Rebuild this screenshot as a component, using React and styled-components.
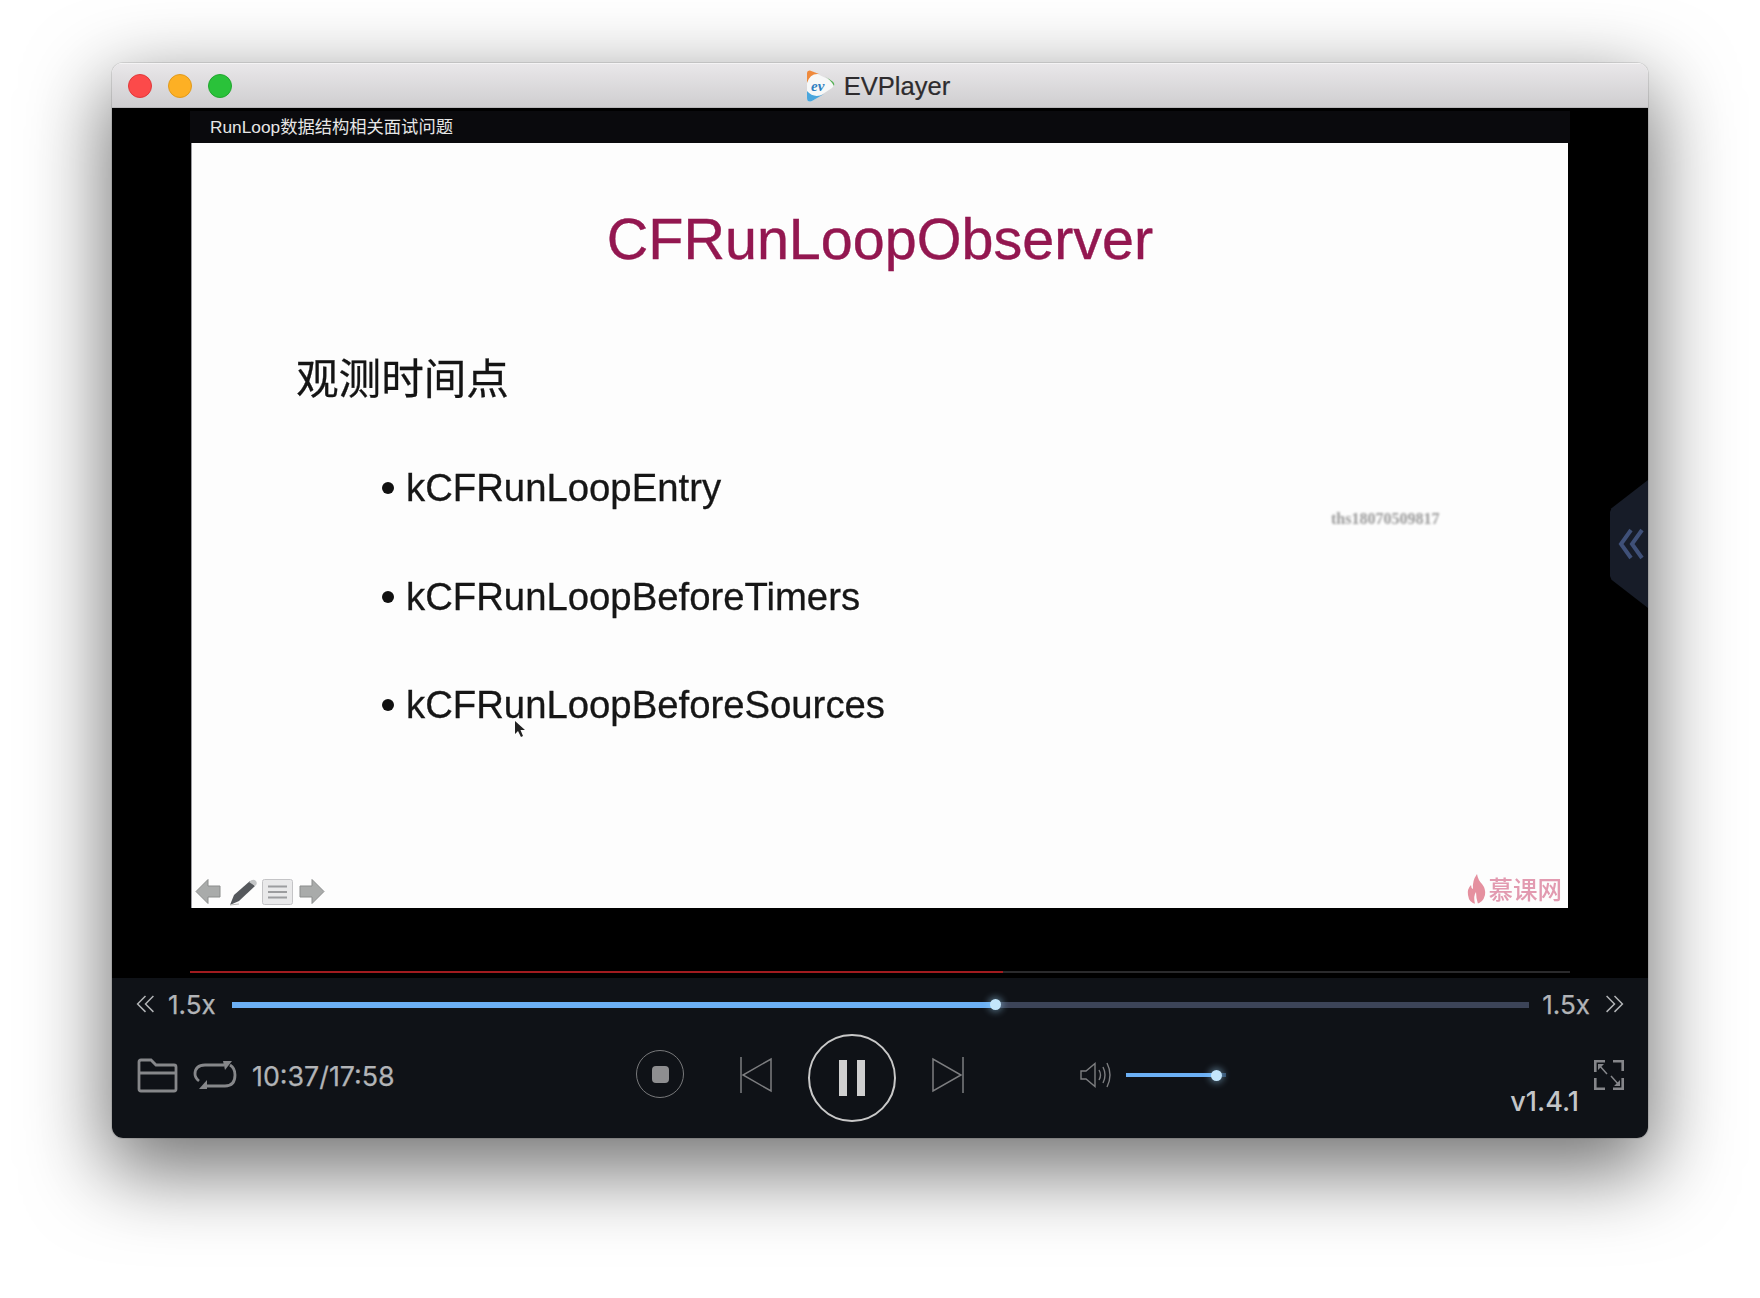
import React from 'react'
import styled, { createGlobalStyle } from 'styled-components'

const PROGRESS = 0.589

const GlobalStyle = createGlobalStyle`
  html, body {
    margin: 0;
    padding: 0;
    background: #fff;
  }
  body {
    width: 1760px;
    height: 1298px;
    overflow: hidden;
    font-family: Inter, 'Liberation Sans', 'Noto Sans CJK SC', sans-serif;
  }
`

const Window = styled.div`
  position: relative;
  width: 1536px;
  height: 1075px;
  margin: 63px 0 0 112px;
  border-radius: 11px;
  overflow: hidden;
  box-shadow: 0 28px 80px 6px rgba(0, 0, 0, 0.55), 0 0 0 1px rgba(0, 0, 0, 0.1);
`
const TitleBar = styled.div`
  position: relative;
  height: 45px;
  box-sizing: border-box;
  display: flex;
  align-items: center;
  justify-content: center;
  gap: 8px;
  padding-right: 6px;
  background: linear-gradient(#e9e7e9, #cfced0);
  border-top: 1px solid #f4f3f4;
  border-bottom: 1px solid #b9b8ba;
`
const Lights = styled.div`
  position: absolute;
  left: 16px;
  top: 10px;
  display: flex;
  gap: 16px;
`
const Light = styled.span`
  width: 24px;
  height: 24px;
  box-sizing: border-box;
  border-radius: 50%;
  background: ${p => p.$color};
  border: 1px solid ${p => p.$edge};
`
const AppName = styled.span`
  font-family: 'Liberation Sans', sans-serif;
  font-size: 25.6px;
  color: #2e2c2e;
  margin-top: 1px;
  -webkit-text-stroke: 0.2px #2e2c2e;
`
const Video = styled.div`
  height: 870px;
  box-sizing: border-box;
  background: #000;
  padding: 3px 0 0 78px;
`
const Column = styled.div`
  width: 1380px;
`
const LessonBar = styled.div`
  height: 32px;
  box-sizing: border-box;
  background: #0a0a0d;
  color: #e6e6e6;
  display: flex;
  align-items: center;
  padding: 0 0 4px 20px;
  font-family: 'Liberation Sans', 'Noto Sans CJK SC', sans-serif;
  font-size: 17.3px;
`
const Slide = styled.div`
  position: relative;
  height: 765px;
  width: 1377px;
  margin-left: 1px;
  box-sizing: border-box;
  background: #fdfdfd;
  border-left: 1px solid #9a9a9f;
  display: flex;
  flex-direction: column;
  font-family: 'Liberation Sans', 'Noto Sans CJK SC', sans-serif;
  overflow: hidden;
`
const SlideTitle = styled.h1`
  margin: 58px 0 0;
  text-align: center;
  font-size: 57.5px;
  line-height: 76px;
  font-weight: 400;
  color: #931750;
  -webkit-text-stroke: 0.4px #931750;
  filter: blur(0.5px);
`
const SlideHeading = styled.h2`
  margin: 71px 0 0 104px;
  font-family: 'Noto Sans CJK SC', sans-serif;
  font-size: 42.6px;
  line-height: 56px;
  font-weight: 400;
  color: #141414;
  -webkit-text-stroke: 0.3px #141414;
  filter: blur(0.4px);
`
const Bullets = styled.ul`
  list-style: none;
  margin: 62px 0 0 190px;
  padding: 0;
  display: flex;
  flex-direction: column;
  gap: 64.5px;
  filter: blur(0.4px);
`
const Bullet = styled.li`
  display: flex;
  align-items: center;
  gap: 12px;
  height: 44px;
  font-size: 38.3px;
  color: #161616;
  -webkit-text-stroke: 0.3px #161616;
  &::before {
    content: '';
    width: 12px;
    height: 12px;
    border-radius: 50%;
    background: #111;
  }
`
const Watermark = styled.span`
  position: absolute;
  left: 1139px;
  top: 367px;
  font-family: 'Liberation Serif', serif;
  font-weight: 700;
  font-size: 16px;
  color: #9a9a9a;
  filter: blur(0.9px);
`
const Cursor = styled.svg`
  position: absolute;
  left: 322px;
  top: 577px;
`
const SlideFooter = styled.div`
  margin-top: auto;
  height: 33px;
  padding: 0 6px 0 3px;
  display: flex;
  align-items: center;
  filter: blur(0.5px);
`
const SlideTools = styled.div`
  display: flex;
  align-items: center;
  gap: 5px;
`
const Brand = styled.div`
  margin-left: auto;
  padding-bottom: 6px;
  display: flex;
  align-items: center;
  gap: 3px;
  color: #e29ab0;
  font-family: 'Noto Sans CJK SC', sans-serif;
  font-size: 24.5px;
  font-weight: 500;
`
const ToolArrow = styled.svg`
  transform: ${p => (p.$flip ? 'scaleX(-1)' : 'none')};
  margin-left: ${p => (p.$flip ? '1px' : '0')};
`
const PenSvg = styled.svg`
  margin: 0 -1px 0 3px;
`
const VideoProgress = styled.div`
  margin-top: 63px;
  height: 2px;
  background: #2a2a2c;
`
const VideoProgressFill = styled.div`
  height: 100%;
  background: #a11b1f;
`
const SideTab = styled.div`
  position: absolute;
  right: 0;
  top: 417px;
  width: 38px;
  height: 128px;
  box-sizing: border-box;
  padding-left: 4px;
  background: #171c28;
  clip-path: polygon(0 25%, 4% 22%, 100% 0, 100% 100%, 4% 78%, 0 75%);
  display: flex;
  align-items: center;
  justify-content: center;
`
const Controls = styled.div`
  height: 160px;
  background: #0f1217;
  color: #b2b4b7;
`
const SpeedRow = styled.div`
  height: 53px;
  display: flex;
  align-items: center;
  padding: 0 24px;
`
const SpeedLabel = styled.span`
  font-size: 26px;
  -webkit-text-stroke: 0.25px #b2b4b7;
  margin: ${p => (p.$right ? '0 15px 0 13px' : '0 16px 0 13px')};
`
const Track = styled.div`
  position: relative;
  flex: ${p => (p.$width ? `0 0 ${p.$width}px` : 1)};
  height: ${p => p.$height}px;
  background: ${p => p.$back};
`
const TrackFill = styled.div`
  height: 100%;
  background: #6cb0f5;
`
const Thumb = styled.span`
  position: absolute;
  top: 50%;
  width: ${p => p.$size}px;
  height: ${p => p.$size}px;
  margin: -${p => p.$size / 2}px 0 0 -${p => p.$size / 2}px;
  border-radius: 50%;
  background: #c4e6fb;
  box-shadow: 0 0 7px 2px rgba(160, 215, 250, 0.45);
`
const MainRow = styled.div`
  height: 88px;
  display: flex;
  align-items: center;
  padding: 0 24px 0 25px;
`
const LeftGroup = styled.div`
  flex: 0 0 499px;
  display: flex;
  align-items: center;
  gap: 15px;
`
const TimeText = styled.span`
  font-size: 26.8px;
  margin-top: 2px;
  -webkit-text-stroke: 0.25px #b2b4b7;
`
const Transport = styled.div`
  display: flex;
  align-items: center;
  gap: 36px;
`
const Stop = styled.div`
  width: 48px;
  height: 48px;
  box-sizing: border-box;
  margin: -2px 20px 0 0;
  border: 1.5px solid #77787a;
  border-radius: 50%;
  display: flex;
  align-items: center;
  justify-content: center;
  &::after {
    content: '';
    width: 17px;
    height: 17px;
    border-radius: 4px;
    background: #8e8e90;
  }
`
const Pause = styled.div`
  width: 88px;
  height: 88px;
  box-sizing: border-box;
  margin-top: 6px;
  border: 2.5px solid #c8c8c8;
  border-radius: 50%;
  display: flex;
  align-items: center;
  justify-content: center;
  gap: 10px;
`
const PauseBar = styled.span`
  width: 8px;
  height: 36px;
  background: #cfcfcf;
`
const SkipIcon = styled.svg`
  transform: ${p => (p.$flip ? 'scaleX(-1)' : 'none')};
`
const Volume = styled.div`
  margin-left: 116px;
  display: flex;
  align-items: center;
  gap: 14px;
`
const Version = styled.span`
  margin: 52px 15px 0 auto;
  font-size: 27px;
  font-weight: 500;
  color: #c3c5c8;
`

const LogoIcon = () => (
  <svg width="32" height="34" viewBox="0 0 32 34">
    <path d="M6 1.500 L28 12 Q32 15 28 19 L8 32 Q3 34 3 29 L3 5 Q3 1 6 1.500Z" fill="#f7f8f8" />
    <path d="M3 22 L3 29 Q3 34 8 32 L20 25 Q10 30 3 22Z" fill="#4aa6dd" />
    <path d="M3 4 Q3 1 6 1.500 L15 5 Q6 4 3 14Z" fill="#ef8a3c" />
    <path d="M19 6 L28 12 Q31 14 30 17 Q27 11 19 6Z" fill="#58b056" />
    <text x="7" y="22" fontFamily="Liberation Serif, serif" fontStyle="italic" fontWeight="700" fontSize="15" fill="#2f7fc1">ev</text>
  </svg>
)

const ArrowTool = ({ flip }) => (
  <ToolArrow $flip={flip} width="26" height="27" viewBox="0 0 26 27">
    <path d="M1 13.500 L13 1.500 V8 H25 V19 H13 V25.500Z" fill="#a9abaa" stroke="#8b8d8c" strokeWidth="1" />
  </ToolArrow>
)

const PenTool = () => (
  <PenSvg width="29" height="28" viewBox="0 0 29 28">
    <path d="M1 27 L5 17 L21 3 L26 8 L10 23Z" fill="#55585c" />
    <path d="M20 4 Q24 0 27 3 Q29 6 26 8Z" fill="#c3c5c6" />
    <path d="M1 27 L10 26" stroke="#b9b9b9" strokeWidth="1" />
  </PenSvg>
)

const ListTool = () => (
  <svg width="31" height="26" viewBox="0 0 31 26">
    <rect x="0.500" y="0.500" width="30" height="25" rx="2" fill="#e9e9ea" stroke="#c4c4c6" />
    <path d="M6 7.500 H25 M6 13 H25 M6 18.500 H25" stroke="#9c9d9f" strokeWidth="2" />
  </svg>
)

const FlameIcon = () => (
  <svg width="19" height="30" viewBox="0 0 19 30">
    <path d="M10 0 Q11 6 15 10 Q19 15 18 21 Q16 29 9 30 Q2 29 1 21 Q0 15 4 11 Q4 14 6 15 Q5 7 10 0Z" fill="#e5909f" />
    <path d="M9 18 Q6 22 8 30 L11 30 Q9 24 9 18Z" fill="#fdfdfd" />
  </svg>
)

const DoubleChevron = ({ left }) => (
  <svg width="19" height="19" viewBox="0 0 18 18" fill="none" stroke="#b2b4b7" strokeWidth="1.400">
    {left
      ? <path d="M9 1 L1.500 8.500 L9 16 M16.500 1 L9 8.500 L16.500 16" />
      : <path d="M1.500 1 L9 8.500 L1.500 16 M9 1 L16.500 8.500 L9 16" />}
  </svg>
)

const FolderIcon = () => (
  <svg width="41" height="35" viewBox="0 0 41 35" fill="none" stroke="#86878a" strokeWidth="2.800">
    <path d="M2 4 Q2 2 4 2 H14 L19 7 H37 Q39 7 39 9 V31 Q39 33 37 33 H4 Q2 33 2 31Z" />
    <path d="M2 15 H39" />
  </svg>
)

const LoopIcon = () => (
  <svg width="44" height="30" viewBox="0 0 44 30" fill="none" stroke="#86878a" strokeWidth="2.800">
    <path d="M6 21 Q2 18 2 14 Q2 5 12 5 H31" />
    <path d="M37 5 Q42 8 42 15 Q42 26 32 26 H13" />
    <path d="M30 1 L39 1 L32 10Z" fill="#86878a" stroke="none" />
    <path d="M14 20 L14 29 L6 29Z" fill="#86878a" stroke="none" />
  </svg>
)

const PrevIcon = ({ flip }) => (
  <SkipIcon $flip={flip} width="32" height="36" viewBox="0 0 32 36" fill="none" stroke="#7d7e80" strokeWidth="1.500">
    <path d="M1 0 V36" />
    <path d="M31 2 V34 L3 18Z" />
  </SkipIcon>
)

const SpeakerIcon = () => (
  <svg width="32" height="26" viewBox="0 0 32 26" fill="none" stroke="#7d7e80" strokeWidth="1.400">
    <path d="M1 9 H6 L15 1.500 V24.500 L6 17 H1Z" />
    <path d="M19 8 Q22 13 19 18" />
    <path d="M23 5 Q27 13 23 21" />
    <path d="M27 1 Q33 13 27 25" />
  </svg>
)

const ExpandIcon = () => (
  <svg width="30" height="30" viewBox="0 0 30 30" fill="none" stroke="#85868a" strokeWidth="2.600">
    <path d="M1.300 12 V1.300 H11 M19 1.300 H28.700 V11 M1.300 18 V28.700 H11 M19 28.700 H28.700 V18" />
    <path d="M5 5 L13 14 M25 25 L17 16" strokeWidth="1.500" />
    <path d="M4 4 H10 L4 10Z M26 26 H20 L26 20Z" fill="#85868a" stroke="none" />
  </svg>
)

const topics = ['kCFRunLoopEntry', 'kCFRunLoopBeforeTimers', 'kCFRunLoopBeforeSources']

export default function App() {
  const percent = `${PROGRESS * 100}%`
  return (
    <>
      <GlobalStyle />
      <Window>
        <TitleBar>
          <Lights>
            <Light $color="#fc4a4a" $edge="#e0393b" />
            <Light $color="#fdb024" $edge="#e09a1c" />
            <Light $color="#2ac23a" $edge="#22a62f" />
          </Lights>
          <LogoIcon />
          <AppName>EVPlayer</AppName>
        </TitleBar>
        <Video>
          <Column>
            <LessonBar>RunLoop数据结构相关面试问题</LessonBar>
            <Slide>
              <SlideTitle>CFRunLoopObserver</SlideTitle>
              <SlideHeading>观测时间点</SlideHeading>
              <Bullets>
                {topics.map(t => <Bullet key={t}>{t}</Bullet>)}
              </Bullets>
              <Watermark>ths18070509817</Watermark>
              <Cursor width="12" height="18" viewBox="0 0 12 18">
                <path d="M1 1 V14 L4 11 L7 17 L9 16 L6.500 10 H11Z" fill="#222" />
              </Cursor>
              <SlideFooter>
                <SlideTools>
                  <ArrowTool />
                  <PenTool />
                  <ListTool />
                  <ArrowTool flip />
                </SlideTools>
                <Brand>
                  <FlameIcon />
                  慕课网
                </Brand>
              </SlideFooter>
            </Slide>
            <VideoProgress>
              <VideoProgressFill style={{ width: percent }} />
            </VideoProgress>
          </Column>
        </Video>
        <SideTab>
          <svg width="26" height="32" viewBox="0 0 26 32" fill="none" stroke="#3f5078" strokeWidth="4">
            <path d="M13 2 L3 16 L13 30 M24 2 L14 16 L24 30" />
          </svg>
        </SideTab>
        <Controls>
          <SpeedRow>
            <DoubleChevron left />
            <SpeedLabel>1.5x</SpeedLabel>
            <Track $height={6} $back="#3c4458">
              <TrackFill style={{ width: percent }} />
              <Thumb $size={11} style={{ left: percent }} />
            </Track>
            <SpeedLabel $right>1.5x</SpeedLabel>
            <DoubleChevron />
          </SpeedRow>
          <MainRow>
            <LeftGroup>
              <FolderIcon />
              <LoopIcon />
              <TimeText>10:37/17:58</TimeText>
            </LeftGroup>
            <Transport>
              <Stop />
              <PrevIcon />
              <Pause>
                <PauseBar />
                <PauseBar />
              </Pause>
              <PrevIcon flip />
            </Transport>
            <Volume>
              <SpeakerIcon />
              <Track $width={100} $height={4} $back="#2f4a68">
                <TrackFill style={{ width: '90%' }} />
                <Thumb $size={11} style={{ left: '90%' }} />
              </Track>
            </Volume>
            <Version>v1.4.1</Version>
            <ExpandIcon />
          </MainRow>
        </Controls>
      </Window>
    </>
  )
}
